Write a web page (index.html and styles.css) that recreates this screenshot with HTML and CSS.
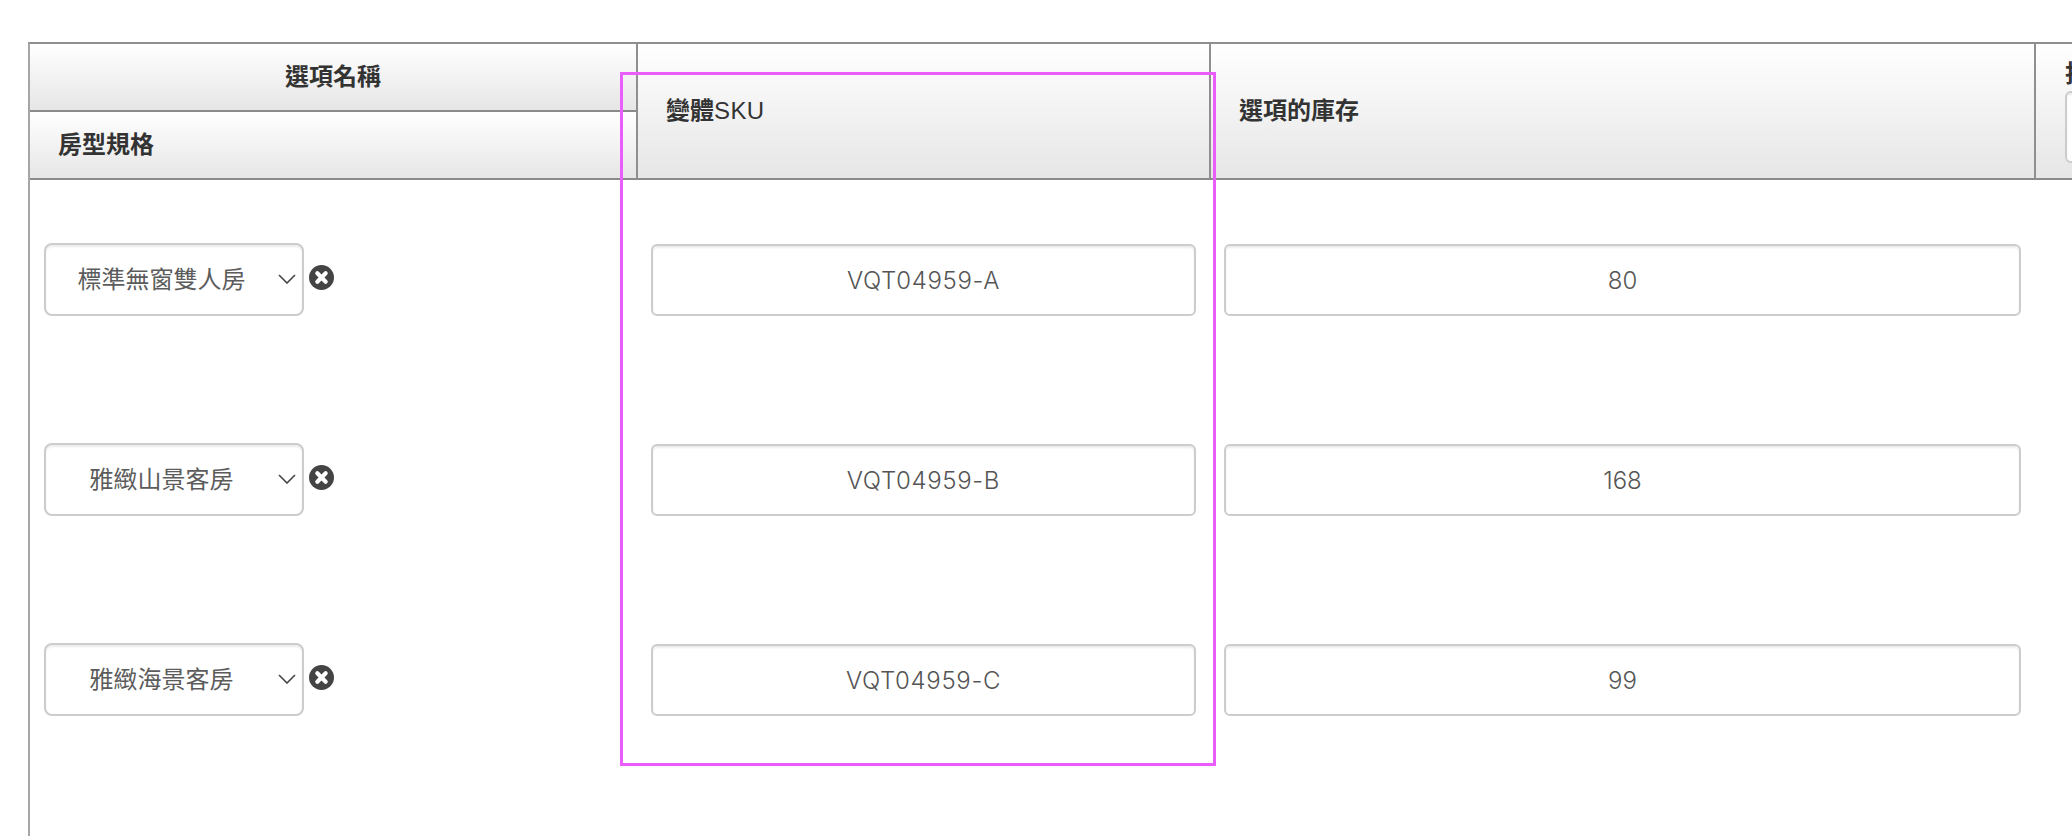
FILE: index.html
```html
<!DOCTYPE html>
<html lang="zh-Hant">
<head>
<meta charset="utf-8">
<title>選項</title>
<link rel="stylesheet" href="styles.css">
</head>
<body>
<div class="frame">
  <table class="variants">
    <colgroup>
      <col class="col-name"><col class="col-sku"><col class="col-stock"><col class="col-extra">
    </colgroup>
    <thead>
      <tr>
        <th class="head-title">選項名稱</th>
        <th class="head-tall" rowspan="2">變體<span class="latin">SKU</span></th>
        <th class="head-tall" rowspan="2">選項的庫存</th>
        <th class="head-last" rowspan="2"><div class="last-label">折扣</div><input class="field last-field" type="text" value=""></th>
      </tr>
      <tr>
        <th class="head-sub">房型規格</th>
      </tr>
    </thead>
    <tbody>
      <tr class="row">
        <td>
          <div class="name-cell">
            <div class="select-wrap">
              <select class="field select"><option>標準無窗雙人房</option></select>
              <svg class="chevron" width="18" height="10" viewBox="0 0 18 10"><path d="M1 1l8 8 8-8" fill="none" stroke="#444" stroke-width="1.6"/></svg>
            </div>
            <svg class="remove" width="25" height="25" viewBox="0 0 24 24"><circle cx="12" cy="12" r="12" fill="#444"/><path d="M8 8l8 8M16 8l-8 8" stroke="#fff" stroke-width="4" stroke-linecap="round"/></svg>
          </div>
        </td>
        <td><input class="field sku-field" type="text" value="VQT04959-A"></td>
        <td><input class="field" type="text" value="80"></td>
        <td></td>
      </tr>
      <tr class="row">
        <td>
          <div class="name-cell">
            <div class="select-wrap">
              <select class="field select"><option>雅緻山景客房</option></select>
              <svg class="chevron" width="18" height="10" viewBox="0 0 18 10"><path d="M1 1l8 8 8-8" fill="none" stroke="#444" stroke-width="1.6"/></svg>
            </div>
            <svg class="remove" width="25" height="25" viewBox="0 0 24 24"><circle cx="12" cy="12" r="12" fill="#444"/><path d="M8 8l8 8M16 8l-8 8" stroke="#fff" stroke-width="4" stroke-linecap="round"/></svg>
          </div>
        </td>
        <td><input class="field sku-field" type="text" value="VQT04959-B"></td>
        <td><input class="field" type="text" value="168"></td>
        <td></td>
      </tr>
      <tr class="row">
        <td>
          <div class="name-cell">
            <div class="select-wrap">
              <select class="field select"><option>雅緻海景客房</option></select>
              <svg class="chevron" width="18" height="10" viewBox="0 0 18 10"><path d="M1 1l8 8 8-8" fill="none" stroke="#444" stroke-width="1.6"/></svg>
            </div>
            <svg class="remove" width="25" height="25" viewBox="0 0 24 24"><circle cx="12" cy="12" r="12" fill="#444"/><path d="M8 8l8 8M16 8l-8 8" stroke="#fff" stroke-width="4" stroke-linecap="round"/></svg>
          </div>
        </td>
        <td><input class="field sku-field" type="text" value="VQT04959-C"></td>
        <td><input class="field" type="text" value="99"></td>
        <td></td>
      </tr>
      <tr class="row-rest"><td colspan="4"></td></tr>
    </tbody>
  </table>
  <div class="highlight"></div>
</div>
</body>
</html>
```
FILE: styles.css
```css
* { box-sizing: border-box; }
html, body { margin: 0; height: 100%; background: #fff; overflow: hidden; }
body {
  font-family: "Liberation Sans", "Noto Sans CJK TC", sans-serif;
  font-size: 24px;
  color: #333;
}
.frame { position: relative; width: 2300px; padding: 42px 0 0 28px; }
.variants {
  table-layout: fixed;
  width: 2272px;
  border-collapse: separate;
  border-spacing: 0;
  border-top: 2px solid #8f8f8f;
  border-left: 2px solid #a6a6a6;
}
.col-name { width: 608px; }
.col-sku { width: 573px; }
.col-stock { width: 825px; }
.col-extra { width: 266px; }

th {
  padding: 0 28px;
  text-align: left;
  font-weight: 700;
  font-size: 24px;
  line-height: 32px;
  background: linear-gradient(#fff, #e6e6e6);
  border-right: 2px solid #8f8f8f;
  border-bottom: 2px solid #8a8a8a;
}
.latin { font-weight: 400; letter-spacing: 0.4px; }
.head-title { height: 68px; text-align: center; }
.head-sub { height: 68px; }
.head-last { padding: 14px 0 15px 29px; vertical-align: top; border-right: 0; }
.last-label { height: 33px; line-height: 32px; }
.last-field { width: 200px; display: block; }

td { padding: 0 15px 0 13px; vertical-align: middle; }
.row td { height: 200px; }
.row td:first-child { padding: 0 0 0 14px; }
.row-rest td { height: 120px; }

.field {
  display: block;
  width: 100%;
  height: 72px;
  padding: 0 12px;
  margin: 0;
  font-family: "Inter", "Noto Sans CJK TC", sans-serif;
  font-size: 24px;
  font-weight: 300;
  color: #555;
  text-align: center;
  background: #fff;
  border: 2px solid #ccc;
  border-radius: 6px;
  box-shadow: inset 0 2px 2px rgba(0, 0, 0, 0.075);
  outline: none;
}
.sku-field { letter-spacing: 0.66px; }
.name-cell { display: flex; align-items: center; gap: 5px; margin-bottom: 2px; }
.select-wrap { position: relative; width: 260px; flex: none; }
.select {
  appearance: none;
  -webkit-appearance: none;
  height: 73px;
  padding: 0 25px 0 0;
  text-align-last: center;
  font-weight: 400;
  color: #5c5c5c;
  border-radius: 8px;
}
.chevron { position: absolute; right: 8px; top: 31px; pointer-events: none; }
.remove { flex: none; margin-bottom: 4px; }

.highlight {
  position: absolute;
  left: 620px;
  top: 72px;
  width: 596px;
  height: 694px;
  border: 3px solid #ea5cfb;
  pointer-events: none;
}
```
